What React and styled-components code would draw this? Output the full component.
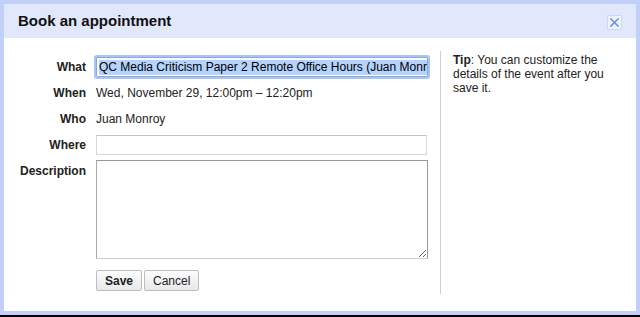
import React from 'react'
import styled, { createGlobalStyle } from 'styled-components'

const GlobalStyle = createGlobalStyle`
  html, body {
    margin: 0;
    padding: 0;
    background: #000;
  }
  body {
    font-family: "Liberation Sans", Arial, sans-serif;
  }
`

export default class App extends React.Component {
  render() {
    return (
      <>
        <GlobalStyle />
        <Frame>
          <Header>
            <Title>Book an appointment</Title>
            <CloseBox aria-label="Close">
              <svg width="9" height="9" viewBox="0 0 9 9">
                <path d="M1 1L8 8M8 1L1 8" stroke="#6f94e6" strokeWidth="1.6" strokeLinecap="square" />
              </svg>
            </CloseBox>
          </Header>
          <Body>
            <Form>
              <Row height={26}>
                <Label>What</Label>
                <FocusedField>
                  <Selected>QC Media Criticism Paper 2 Remote Office Hours (Juan Monroy)</Selected>
                </FocusedField>
              </Row>
              <Row height={26}>
                <Label>When</Label>
                <Value>Wed, November 29, 12:00pm – 12:20pm</Value>
              </Row>
              <Row height={26}>
                <Label>Who</Label>
                <Value>Juan Monroy</Value>
              </Row>
              <Row height={26}>
                <Label>Where</Label>
                <TextInput type="text" />
              </Row>
              <Row top>
                <Label pad={4}>Description</Label>
                <TextArea />
              </Row>
              <Buttons>
                <Button bold>Save</Button>
                <Button>Cancel</Button>
              </Buttons>
            </Form>
            <Tip>
              <b>Tip</b>: You can customize the details of the event after you save it.
            </Tip>
          </Body>
        </Frame>
      </>
    )
  }
}

const Frame = styled.div`
  box-sizing: border-box;
  width: 640px;
  height: 315px;
  border: 4px solid #c1cff9;
  background: #fff;
  display: flex;
  flex-direction: column;
`

const Header = styled.div`
  height: 34px;
  background: #e1e8fb;
  display: flex;
  align-items: center;
  justify-content: space-between;
  padding: 0 14px;
`

const Title = styled.div`
  font-size: 15px;
  font-weight: bold;
  color: #111;
  margin-top: -1px;
`

const CloseBox = styled.div`
  box-sizing: border-box;
  width: 15px;
  height: 15px;
  background: #eef2fd;
  border: 1px solid #cdd8f7;
  display: flex;
  align-items: center;
  justify-content: center;
  margin-top: 2px;
`

const Body = styled.div`
  display: flex;
  padding: 13px 0 17px;
`

const Form = styled.div`
  width: 410px;
  flex: none;
  padding: 3px 12px 3px 14px;
  border-right: 1px solid #cfcfcf;
`

const Row = styled.div`
  display: flex;
  align-items: ${p => (p.top ? 'flex-start' : 'center')};
  height: ${p => (p.height ? p.height + 'px' : 'auto')};
  margin-top: ${p => (p.top ? '2px' : '0')};
  gap: 10px;
`

const Label = styled.div`
  width: 68px;
  flex: none;
  text-align: right;
  font-size: 12px;
  font-weight: bold;
  color: #222;
  padding-top: ${p => (p.pad ? p.pad + 'px' : '0')};
`

const Value = styled.div`
  font-size: 12px;
  color: #222;
`

const FocusedField = styled.div`
  box-sizing: border-box;
  width: 332px;
  height: 20px;
  border: 1px solid #8aa8e0;
  box-shadow: 0 0 0 2px #a9c6f3;
  border-radius: 1px;
  overflow: hidden;
  white-space: nowrap;
  display: flex;
  align-items: center;
  padding-left: 2px;
`

const Selected = styled.span`
  background: #b4d3fd;
  font-size: 12px;
  color: #000;
  line-height: 15px;
`

const TextInput = styled.input`
  box-sizing: border-box;
  width: 331px;
  height: 20px;
  margin: 0;
  border: 1px solid #d6d6d6;
  border-top-color: #c4c4c4;
  font-family: inherit;
  font-size: 12px;
  outline: none;
`

const TextArea = styled.textarea`
  box-sizing: border-box;
  width: 332px;
  height: 99px;
  margin: 0;
  border: 1px solid #999;
  border-bottom-color: #d0d0d0;
  border-left-color: #a8a8a8;
  font-family: inherit;
  font-size: 12px;
  outline: none;
`

const Buttons = styled.div`
  display: flex;
  gap: 2px;
  margin-top: 11px;
  padding-left: 78px;
`

const Button = styled.button`
  box-sizing: border-box;
  height: 21px;
  padding: 0 8px;
  margin: 0;
  border: 1px solid #bdbdbd;
  border-radius: 2px;
  background: linear-gradient(#fcfcfc, #e8e8e8);
  font-family: inherit;
  font-size: 12px;
  font-weight: ${p => (p.bold ? 'bold' : 'normal')};
  color: #222;
  min-width: ${p => (p.bold ? '45px' : '55px')};
`

const Tip = styled.div`
  width: 165px;
  padding: 2px 0 0 12px;
  font-size: 12px;
  line-height: 14px;
  color: #222;
`
